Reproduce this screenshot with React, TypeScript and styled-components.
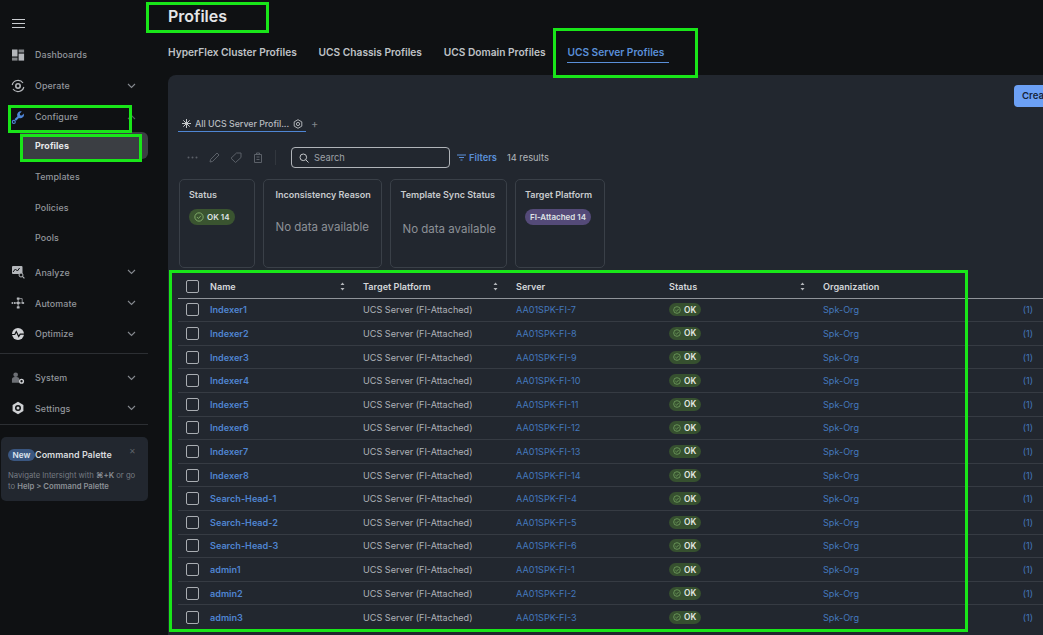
import React from "react";
import styled, { createGlobalStyle } from "styled-components";

const Global = createGlobalStyle`
  html, body { margin: 0; padding: 0; background: #0f1113; overflow: hidden; }
  body { font-family: Inter, "Liberation Sans", sans-serif; }
`;

const Page = styled.div`
  position: relative;
  width: 1043px;
  height: 635px;
  overflow: hidden;
  display: flex;
  background: #0f1113;
`;

const Sidebar = styled.aside`
  width: 148px;
  flex-shrink: 0;
  display: flex;
  flex-direction: column;
  padding-top: 13px;
`;

const Burger = styled.div`
  height: 16px;
  padding-left: 12px;
  margin-bottom: 10.600px;
  color: #c9ccd0;
`;

const NavRow = styled.div<{ $sub?: boolean; $active?: boolean; $h?: number; $mb?: number }>`
  height: ${(p) => p.$h ?? 30.8}px;
  flex-shrink: 0;
  display: flex;
  align-items: center;
  margin-left: ${(p) => (p.$sub ? 20 : 0)}px;
  margin-bottom: ${(p) => p.$mb ?? 0}px;
  padding-left: ${(p) => (p.$sub ? 15 : 11)}px;
  padding-right: 12px;
  font-size: 8.9px;
  font-weight: ${(p) => (p.$active ? 700 : 500)};
  letter-spacing: 0.1px;
  color: ${(p) => (p.$active ? "#e6e8ea" : "#93979d")};
  background: ${(p) => (p.$active ? "#3b3e43" : "transparent")};
  border-radius: ${(p) => (p.$active ? "0 6px 6px 0" : "0")};
`;

const NavIcon = styled.span`
  width: 14px;
  height: 14px;
  margin-right: 10px;
  display: flex;
  color: #b4b7bb;
`;

const NavLabel = styled.span`
  flex: 1;
`;

const Divider = styled.div<{ $top: number; $bottom: number }>`
  height: 1px;
  flex-shrink: 0;
  background: #2c2f33;
  margin: ${(p) => p.$top}px 0 ${(p) => p.$bottom}px;
`;

const Promo = styled.div`
  margin: 12px 0 0 1px;
  height: 64px;
  border-radius: 5px;
  background: #22272f;
  padding: 12px 7px 0;
  box-sizing: border-box;
  position: relative;
`;

const PromoHead = styled.div`
  display: flex;
  align-items: center;
  font-size: 9px;
  font-weight: 600;
  color: #d8dadd;
`;

const NewBadge = styled.span`
  background: #3a5680;
  color: #dfe6f0;
  border-radius: 7px;
  font-size: 8.2px;
  height: 12px;
  line-height: 12px;
  width: 27px;
  text-align: center;
`;

const Close = styled.span`
  position: absolute;
  right: 12px;
  top: 9px;
  font-size: 8px;
  color: #5c6168;
`;

const PromoBody = styled.div`
  margin-top: 9px;
`;

const PromoLine = styled.div`
  font-size: 7.7px;
  line-height: 11.5px;
  white-space: nowrap;
  color: #767b82;
  b {
    font-weight: 600;
    color: #8b9096;
  }
`;

const Main = styled.main`
  flex: 1;
  min-width: 0;
  padding: 7px 0 0 20px;
  display: flex;
  flex-direction: column;
`;

const Title = styled.h1`
  margin: 0;
  height: 19px;
  line-height: 19px;
  font-size: 16px;
  font-weight: 600;
  color: #e4e6e8;
`;

const Tabs = styled.div`
  display: flex;
  gap: 21.800px;
  margin-top: 18px;
  height: 31px;
`;

const Tab = styled.div<{ $active?: boolean }>`
  font-size: 10.2px;
  font-weight: 600;
  line-height: 16px;
  height: 18px;
  color: ${(p) => (p.$active ? "#5a8fd8" : "#bfc2c6")};
  ${(p) => (p.$active ? `border-bottom: 1.5px solid #5a8fd8; padding-right: 5px;` : "")}
`;

const Panel = styled.section`
  flex: 1;
  background: #22272f;
  border-radius: 8px 0 0 0;
  padding: 10px 0 0 10px;
  display: flex;
  flex-direction: column;
  min-width: 0;
`;

const CreateRow = styled.div`
  height: 22px;
  display: flex;
  padding-left: 836px;
`;

const CreateButton = styled.div`
  flex-shrink: 0;
  width: 70px;
  height: 22px;
  box-sizing: border-box;
  padding-left: 8px;
  line-height: 22px;
  border-radius: 4px;
  background: #6ca0f5;
  color: #15233a;
  font-size: 9.6px;
  font-weight: 600;
  white-space: nowrap;
  overflow: hidden;
`;

const ViewTabs = styled.div`
  display: flex;
  align-items: center;
  margin-top: 5px;
  height: 20px;
`;

const ViewTab = styled.div`
  width: 128px;
  height: 20px;
  box-sizing: border-box;
  border-bottom: 1.5px solid #4f86d4;
  display: flex;
  align-items: center;
  padding: 4px 0 0 4px;
  font-size: 8.8px;
  font-weight: 500;
  color: #b9bcc0;
  gap: 4px;
  white-space: nowrap;
`;

const ViewGear = styled.span`
  margin-left: 0;
  display: flex;
`;

const Plus = styled.span`
  margin-left: 5px;
  padding-top: 4px;
  color: #80858b;
  font-size: 11px;
`;

const Toolbar = styled.div`
  display: flex;
  align-items: center;
  margin-top: 15px;
  height: 21px;
  color: #5b6068;
`;

const ToolIcon = styled.span<{ $w: number }>`
  width: ${(p) => p.$w}px;
  display: flex;
  justify-content: center;
`;

const ToolSep = styled.span`
  width: 1px;
  height: 15px;
  background: #32373e;
  margin: 0 15px 0 9px;
`;

const SearchBox = styled.div`
  width: 159px;
  height: 21px;
  box-sizing: border-box;
  border: 1.5px solid #b0b4b9;
  border-radius: 4px;
  display: flex;
  align-items: center;
  padding-left: 7px;
  gap: 5px;
  font-size: 9.3px;
  color: #9ea2a8;
`;

const FilterLink = styled.div`
  margin-left: 7px;
  display: flex;
  align-items: center;
  gap: 3px;
  font-size: 9.3px;
  font-weight: 600;
  color: #5a8fd8;
`;

const Results = styled.div`
  margin-left: 10px;
  font-size: 9.3px;
  color: #b4b7bb;
`;

const Cards = styled.div`
  display: flex;
  gap: 8px;
  margin: 11px 0 0 1px;
`;

const Card = styled.div<{ $w: number; $pad: number }>`
  width: ${(p) => p.$w}px;
  height: 89px;
  box-sizing: border-box;
  border: 1.5px solid #3a4048;
  border-radius: 5px;
  padding: 8.500px 0 0 ${(p) => p.$pad}px;
`;

const CardTitle = styled.div`
  font-size: 9px;
  font-weight: 600;
  line-height: 12px;
  color: #c8cbce;
  white-space: nowrap;
`;

const NoData = styled.div<{ $top: number; $left?: number }>`
  margin: ${(p) => p.$top}px 0 0 ${(p) => p.$left ?? 0}px;
  font-size: 11.5px;
  color: #8d9197;
  white-space: nowrap;
`;

const Pill = styled.span<{ $bg: string }>`
  display: inline-flex;
  align-items: center;
  gap: 3px;
  margin-top: 8.500px;
  height: 16px;
  padding: 0 5px;
  border-radius: 8px;
  background: ${(p) => p.$bg};
  font-size: 8px;
  font-weight: 600;
  color: #dfe2e5;
  white-space: nowrap;
`;

const Table = styled.div`
  margin-top: 8px;
  width: 865px;
`;

const HeaderRow = styled.div`
  display: grid;
  grid-template-columns: 32px 153px 153px 153px 154px 1fr;
  align-items: center;
  height: 22.500px;
  box-sizing: border-box;
  border-bottom: 1.5px solid #90949a;
  font-size: 9.1px;
  font-weight: 600;
  color: #d4d6d9;
`;

const Row = styled.div`
  display: grid;
  grid-template-columns: 32px 153px 153px 153px 154px 1fr;
  align-items: center;
  height: 23.620px;
  box-sizing: border-box;
  border-bottom: 1px solid #363b43;
  font-size: 9.1px;
  color: #aeb2b7;
`;

const LastRow = styled(Row)`
  border-bottom: none;
`;

const CheckCell = styled.div`
  padding-left: 8px;
  display: flex;
`;

const Check = styled.span`
  width: 13px;
  height: 13px;
  box-sizing: border-box;
  border: 1.5px solid #a9adb2;
  border-radius: 2px;
`;

const HeadCell = styled.div`
  display: flex;
  align-items: center;
  justify-content: space-between;
  padding-right: 18px;
`;

const NameLink = styled.span`
  font-weight: 600;
  color: #4f84d0;
`;

const Link = styled.span`
  color: #4478bd;
`;

const Count = styled.div`
  padding-right: 10px;
  color: #4478bd;
  display: flex;
  justify-content: space-between;
`;

const OkPill = styled.span`
  display: inline-flex;
  align-items: center;
  gap: 3px;
  height: 13px;
  width: 32px;
  box-sizing: border-box;
  padding-left: 4px;
  border-radius: 7px;
  background: #36502f;
  font-size: 8.3px;
  font-weight: 600;
  color: #e3e7e2;
`;

const Marker = styled.div<{ $x: number; $y: number; $w: number; $h: number }>`
  position: absolute;
  left: ${(p) => p.$x}px;
  top: ${(p) => p.$y}px;
  width: ${(p) => p.$w}px;
  height: ${(p) => p.$h}px;
  box-sizing: border-box;
  border: 3px solid #19e619;
  pointer-events: none;
`;

const Chevron = ({ up }: { up?: boolean }) => (
  <svg width="9" height="6" viewBox="0 0 9 6" fill="none" stroke={up ? "#55595f" : "#85898f"} strokeWidth="1.1">
    <path d={up ? "M1 5l3.5-3.5L8 5" : "M1 1l3.5 3.5L8 1"} />
  </svg>
);

const icons: Record<string, React.ReactNode> = {
  Dashboards: (
    <svg width="14" height="14" viewBox="0 0 14 14" fill="currentColor">
      <rect x="1" y="1.500" width="5.500" height="7" />
      <rect x="1" y="9.600" width="5.500" height="3" opacity=".7" />
      <rect x="7.600" y="1.500" width="5.500" height="3" opacity=".7" />
      <rect x="7.600" y="5.600" width="5.500" height="7" />
    </svg>
  ),
  Operate: (
    <svg width="14" height="14" viewBox="0 0 14 14" fill="none" stroke="currentColor" strokeWidth="1.2">
      <path d="M1.200 6A6 6 0 0 1 12 4M12.800 8A6 6 0 0 1 2 10" />
      <circle cx="7" cy="7" r="2.200" strokeWidth="1.600" />
    </svg>
  ),
  Configure: (
    <svg width="15" height="15" viewBox="0 0 15 15">
      <path
        d="M13.800 3.200 11.600 5.400 9.800 5 9.400 3.200 11.600 1A4 4 0 0 0 6.800 6.300L3.700 9.400 5.400 11.100 8.500 8A4 4 0 0 0 13.800 3.200Z"
        fill="#4f86d8"
      />
      <circle cx="3" cy="12.200" r="1.600" fill="none" stroke="#4f86d8" strokeWidth="1.200" />
    </svg>
  ),
  Analyze: (
    <svg width="14" height="14" viewBox="0 0 14 14" fill="currentColor">
      <rect x="1" y="1" width="10.500" height="8" rx="1" />
      <path d="M2 7l2.400-3 2 2 2.200-3" stroke="#0f1113" fill="none" strokeWidth="1" />
      <circle cx="10" cy="10" r="2" fill="#0f1113" stroke="currentColor" />
      <path d="M11.400 11.400 13.400 13.400" stroke="currentColor" strokeWidth="1.100" />
    </svg>
  ),
  Automate: (
    <svg width="15" height="14" viewBox="0 0 15 14" fill="currentColor">
      <circle cx="1.500" cy="7" r="1" />
      <circle cx="4" cy="7" r="1" />
      <rect x="6.200" y="1" width="3" height="2.600" rx=".5" />
      <rect x="6.200" y="5.700" width="3" height="2.600" rx=".5" />
      <rect x="6.200" y="10.400" width="3" height="2.600" rx=".5" />
      <circle cx="13" cy="7" r="1.200" />
      <path d="M7.700 3v8M4 7h9M9 2.300h3v4.700" stroke="currentColor" strokeWidth=".8" fill="none" />
    </svg>
  ),
  Optimize: (
    <svg width="14" height="14" viewBox="0 0 14 14">
      <circle cx="7" cy="7" r="6" fill="#d0d2d5" />
      <path d="M0.800 7.500h3l1.500-3 2.400 5 1.500-2.400h4" fill="none" stroke="#0f1113" strokeWidth="1.200" />
    </svg>
  ),
  System: (
    <svg width="15" height="14" viewBox="0 0 15 14">
      <circle cx="5" cy="3.500" r="2.500" fill="#6d7075" />
      <path d="M1 12V9a3 3 0 0 1 3-3h2a3 3 0 0 1 3 3v3z" fill="#6d7075" />
      <circle cx="11.300" cy="10.500" r="2" fill="none" stroke="#cfd1d4" strokeWidth="1.500" />
    </svg>
  ),
  Settings: (
    <svg width="14" height="14" viewBox="0 0 14 14">
      <path d="M7 .8l5.400 3.100v6.200L7 13.200 1.600 10.100V3.900z" fill="#cfd1d4" />
      <circle cx="7" cy="7" r="3" fill="#0f1113" />
      <circle cx="7" cy="7" r="1.500" fill="#cfd1d4" />
    </svg>
  ),
};

const NavItem = ({ label, chevron = true, up }: { label: string; chevron?: boolean; up?: boolean }) => (
  <NavRow>
    <NavIcon>{icons[label]}</NavIcon>
    <NavLabel>{label}</NavLabel>
    {chevron && <Chevron up={up} />}
  </NavRow>
);

const CheckCircle = ({ size, color }: { size: number; color: string }) => (
  <svg width={size} height={size} viewBox="0 0 12 12" fill="none" stroke={color} strokeWidth="1">
    <circle cx="6" cy="6" r="5" />
    <path d="M3.600 6.100l1.700 1.700 3.100-3.300" />
  </svg>
);

const Sort = () => (
  <svg width="5" height="9" viewBox="0 0 5 9" fill="#b4b7bb">
    <path d="M2.500 0.500 4.500 3H.5zM2.500 8.500 .5 6h4z" />
  </svg>
);

const rows: [string, string][] = [
  ["Indexer1", "AA01SPK-FI-7"],
  ["Indexer2", "AA01SPK-FI-8"],
  ["Indexer3", "AA01SPK-FI-9"],
  ["Indexer4", "AA01SPK-FI-10"],
  ["Indexer5", "AA01SPK-FI-11"],
  ["Indexer6", "AA01SPK-FI-12"],
  ["Indexer7", "AA01SPK-FI-13"],
  ["Indexer8", "AA01SPK-FI-14"],
  ["Search-Head-1", "AA01SPK-FI-4"],
  ["Search-Head-2", "AA01SPK-FI-5"],
  ["Search-Head-3", "AA01SPK-FI-6"],
  ["admin1", "AA01SPK-FI-1"],
  ["admin2", "AA01SPK-FI-2"],
  ["admin3", "AA01SPK-FI-3"],
];

const RowCells = ({ name, server }: { name: string; server: string }) => (
  <>
    <CheckCell>
      <Check />
    </CheckCell>
    <NameLink>{name}</NameLink>
    <div>UCS Server (FI-Attached)</div>
    <Link>{server}</Link>
    <div>
      <OkPill>
        <CheckCircle size={8} color="#7fb069" />
        OK
      </OkPill>
    </div>
    <Count>
      <span>Spk-Org</span>
      <span>(1)</span>
    </Count>
  </>
);

export default function App() {
  return (
    <Page>
      <Global />
      <Sidebar>
        <Burger>
          <svg width="13" height="11" viewBox="0 0 13 11" stroke="currentColor" strokeWidth="1.200">
            <path d="M0 1.500h13M0 5.500h13M0 9.500h13" />
          </svg>
        </Burger>
        <NavItem label="Dashboards" chevron={false} />
        <NavItem label="Operate" />
        <NavItem label="Configure" up />
        <NavRow $sub $active $h={27} $mb={2}>Profiles</NavRow>
        <NavRow $sub>Templates</NavRow>
        <NavRow $sub>Policies</NavRow>
        <NavRow $sub $mb={3.6}>Pools</NavRow>
        <NavItem label="Analyze" />
        <NavItem label="Automate" />
        <NavItem label="Optimize" />
        <Divider $top={3.4} $bottom={8.4} />
        <NavItem label="System" />
        <NavItem label="Settings" />
        <Divider $top={0} $bottom={0} />
        <Promo>
          <PromoHead>
            <NewBadge>New</NewBadge>
            Command Palette
          </PromoHead>
          <Close>✕</Close>
          <PromoBody>
            <PromoLine>
              Navigate Intersight with <b>⌘+K</b> or go
            </PromoLine>
            <PromoLine>
              to <b>Help &gt; Command Palette</b>
            </PromoLine>
          </PromoBody>
        </Promo>
      </Sidebar>
      <Main>
        <Title>Profiles</Title>
        <Tabs>
          <Tab>HyperFlex Cluster Profiles</Tab>
          <Tab>UCS Chassis Profiles</Tab>
          <Tab>UCS Domain Profiles</Tab>
          <Tab $active>UCS Server Profiles</Tab>
        </Tabs>
        <Panel>
          <CreateRow>
            <CreateButton>Create UCS</CreateButton>
          </CreateRow>
          <ViewTabs>
            <ViewTab>
              <svg width="9" height="9" viewBox="0 0 9 9" stroke="#c4c7ca" strokeWidth="1">
                <path d="M4.500 0v9M0 4.500h9M1.300 1.300l6.400 6.400M7.700 1.300 1.300 7.700" />
              </svg>
              All UCS Server Profil...
              <ViewGear>
                <svg width="10" height="10" viewBox="0 0 10 10" fill="none" stroke="#aeb1b5" strokeWidth="1">
                  <path d="M5 .7l3.800 2.150v4.300L5 9.300 1.200 7.150v-4.300z" />
                  <circle cx="5" cy="5" r="1.600" />
                </svg>
              </ViewGear>
            </ViewTab>
            <Plus>+</Plus>
          </ViewTabs>
          <Toolbar>
            <ToolIcon $w={28}>
              <svg width="11" height="3" viewBox="0 0 11 3" fill="currentColor">
                <circle cx="1.500" cy="1.500" r="1" />
                <circle cx="5.500" cy="1.500" r="1" />
                <circle cx="9.500" cy="1.500" r="1" />
              </svg>
            </ToolIcon>
            <ToolIcon $w={16}>
              <svg width="11" height="11" viewBox="0 0 11 11" fill="none" stroke="currentColor" strokeWidth="1">
                <path d="M1 10l.6-2.600L8 1l2 2-6.400 6.400z" />
              </svg>
            </ToolIcon>
            <ToolIcon $w={28}>
              <svg width="12" height="11" viewBox="0 0 12 11" fill="none" stroke="currentColor" strokeWidth="1">
                <path d="M1 6.200 6.500 1H11v4.500L5.500 10.500z" />
              </svg>
            </ToolIcon>
            <ToolIcon $w={16}>
              <svg width="10" height="11" viewBox="0 0 10 11" fill="none" stroke="currentColor" strokeWidth="1">
                <path d="M1.500 2.500h7v8h-7zM3.500 2.500V1h3v1.500M3.500 5h3M3.500 7.500h3" />
              </svg>
            </ToolIcon>
            <ToolSep />
            <SearchBox>
              <svg width="10" height="10" viewBox="0 0 10 10" fill="none" stroke="#c4c7ca" strokeWidth="1">
                <circle cx="4.300" cy="4.300" r="3.300" />
                <path d="M6.800 6.800 9.500 9.500" />
              </svg>
              Search
            </SearchBox>
            <FilterLink>
              <svg width="9" height="7" viewBox="0 0 9 7" stroke="#5a8fd8" strokeWidth="1.200">
                <path d="M0 1h9M2 3.500h5M3.500 6h2" />
              </svg>
              Filters
            </FilterLink>
            <Results>14 results</Results>
          </Toolbar>
          <Cards>
            <Card $w={76} $pad={9}>
              <CardTitle>Status</CardTitle>
              <Pill $bg="#3a5430">
                <CheckCircle size={10} color="#8dbb72" />
                OK 14
              </Pill>
            </Card>
            <Card $w={119} $pad={11.500}>
              <CardTitle>Inconsistency Reason</CardTitle>
              <NoData $top={19}>No data available</NoData>
            </Card>
            <Card $w={117} $pad={9.500}>
              <CardTitle>Template Sync Status</CardTitle>
              <NoData $top={21} $left={2}>No data available</NoData>
            </Card>
            <Card $w={90} $pad={9}>
              <CardTitle>Target Platform</CardTitle>
              <Pill $bg="#544a78">FI-Attached 14</Pill>
            </Card>
          </Cards>
          <Table>
            <HeaderRow>
              <CheckCell>
                <Check />
              </CheckCell>
              <HeadCell>
                Name
                <Sort />
              </HeadCell>
              <HeadCell>
                Target Platform
                <Sort />
              </HeadCell>
              <HeadCell>Server</HeadCell>
              <HeadCell>
                Status
                <Sort />
              </HeadCell>
              <HeadCell>Organization</HeadCell>
            </HeaderRow>
            {rows.map(([name, server], i) =>
              i === rows.length - 1 ? (
                <LastRow key={name}>
                  <RowCells name={name} server={server} />
                </LastRow>
              ) : (
                <Row key={name}>
                  <RowCells name={name} server={server} />
                </Row>
              )
            )}
          </Table>
        </Panel>
      </Main>
      <Marker $x={146} $y={2} $w={123} $h={31} />
      <Marker $x={553} $y={28} $w={145} $h={50} />
      <Marker $x={8} $y={105} $w={124} $h={28} />
      <Marker $x={20} $y={134} $w={122} $h={28} />
      <Marker $x={169} $y={270} $w={799} $h={362} />
    </Page>
  );
}
